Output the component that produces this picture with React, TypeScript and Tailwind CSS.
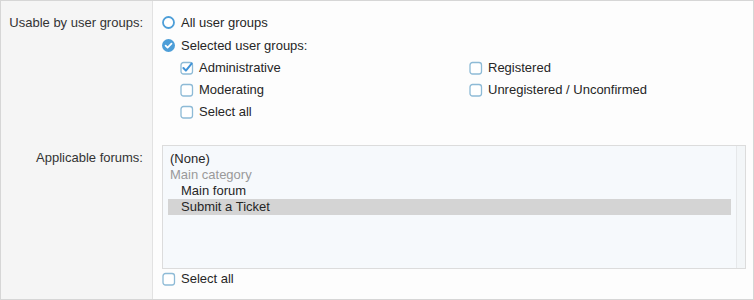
const font = { fontFamily: '"Liberation Sans", Arial, sans-serif' };

function Radio({ checked }: { checked?: boolean }) {
  return (
    <svg width="13" height="13" viewBox="0 0 13 13" className="shrink-0">
      {checked ? (
        <>
          <circle cx="6.5" cy="6.5" r="6.5" fill="#4d9ed8" />
          <path d="M3.6 6.6 L5.6 8.6 L9.5 4.6" fill="none" stroke="#fff" strokeWidth="1.8" strokeLinecap="round" strokeLinejoin="round" />
        </>
      ) : (
        <circle cx="6.5" cy="6.5" r="5.5" fill="#fff" stroke="#4d9ed8" strokeWidth="1.8" />
      )}
    </svg>
  );
}

function Check({ checked }: { checked?: boolean }) {
  return (
    <svg width="14" height="14" viewBox="0 0 14 14" className="shrink-0 overflow-visible">
      <rect x="1" y="1.5" width="11.5" height="11.5" rx="2.5" fill="#fff" stroke="#8dbad6" strokeWidth="1.3" />
      {checked && (
        <path d="M3.4 7 L5.9 9.6 L11.6 2.6" fill="none" stroke="#3f93d8" strokeWidth="2" strokeLinecap="round" strokeLinejoin="round" />
      )}
    </svg>
  );
}

function CheckRow({ label, checked }: { label: string; checked?: boolean }) {
  return (
    <label className="flex h-[22px] items-center gap-[5px]">
      <Check checked={checked} />
      <span>{label}</span>
    </label>
  );
}

export default function App() {
  return (
    <div className="h-[300px] w-[754px] overflow-hidden bg-white text-[13px] text-[#262626]" style={font}>
      <div className="flex h-full flex-col border border-[#d6d6d6]">
        {/* Usable by user groups */}
        <div className="flex h-[134px]">
          <div className="w-[152px] shrink-0 border-r border-[#e2e2e2] bg-[#f5f5f5] pr-[9px] pt-[11px] text-right">
            <div className="leading-[22px] text-[#333]">Usable by user groups:</div>
          </div>
          <div className="flex-1 bg-[#fdfdfd] pl-[9px] pt-[10px]">
            <label className="flex h-[23px] items-center gap-[6px]">
              <Radio />
              <span>All user groups</span>
            </label>
            <label className="flex h-[23px] items-center gap-[6px]">
              <Radio checked />
              <span>Selected user groups:</span>
            </label>
            <div className="grid grid-cols-[289px_1fr] pl-[18px]">
              <div>
                <CheckRow label="Administrative" checked />
                <CheckRow label="Moderating" />
                <CheckRow label="Select all" />
              </div>
              <div>
                <CheckRow label="Registered" />
                <CheckRow label="Unregistered / Unconfirmed" />
              </div>
            </div>
          </div>
        </div>

        {/* Applicable forums */}
        <div className="flex flex-1">
          <div className="w-[152px] shrink-0 border-r border-[#e2e2e2] bg-[#f5f5f5] pr-[9px] pt-[15px] text-right">
            <div className="leading-[16px] text-[#333]">Applicable forums:</div>
          </div>
          <div className="flex-1 bg-[#fdfdfd] pl-[9px] pr-[7px] pt-[10px]">
            <div className="flex h-[124px] border border-[#dcdcdc] bg-[#f6f9fc]">
              <div className="flex-1 pl-[5px] pr-[5px] pt-[5px] leading-[16px]">
                <div className="pl-[2px]">(None)</div>
                <div className="pl-[2px] text-[#9a9a9a]">Main category</div>
                <div className="pl-[13px]">Main forum</div>
                <div className="bg-[#d4d4d4] pl-[13px]">Submit a Ticket</div>
              </div>
              <div className="w-[9px] border-l border-[#e6e8ea] bg-[#f3f6f8]" />
            </div>
            <label className="flex h-[19px] items-center gap-[5px]">
              <Check />
              <span>Select all</span>
            </label>
          </div>
        </div>
      </div>
    </div>
  );
}
